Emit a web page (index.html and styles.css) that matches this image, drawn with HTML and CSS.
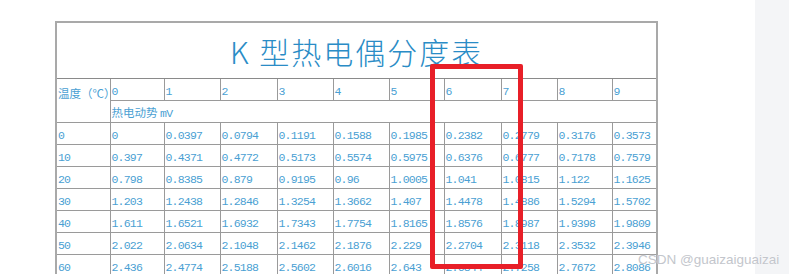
FILE: index.html
```html
<!DOCTYPE html>
<html lang="zh">
<head>
<meta charset="utf-8">
<link rel="stylesheet" href="styles.css">
</head>
<body>
<div class="page">
  <main class="doc">
    <div class="sheet">
      <table class="ktable">
        <colgroup>
          <col class="c54"><col class="c54"><col class="c56"><col class="c57"><col class="c56"><col class="c56"><col class="c55"><col class="c57"><col class="c56"><col class="c55"><col class="c45">
        </colgroup>
        <tr class="title-row"><td colspan="11" class="title">K 型热电偶分度表</td></tr>
        <tr class="hrow"><td rowspan="2" class="cjk label">温度（℃）</td><td>0</td><td>1</td><td>2</td><td>3</td><td>4</td><td>5</td><td>6</td><td>7</td><td>8</td><td>9</td></tr>
        <tr class="hrow"><td colspan="10" class="cjk">热电动势 <span class="mono">mV</span></td></tr>
        <tr class="light"><td>0</td><td>0</td><td>0.0397</td><td>0.0794</td><td>0.1191</td><td>0.1588</td><td>0.1985</td><td>0.2382</td><td>0.2779</td><td>0.3176</td><td>0.3573</td></tr>
        <tr class="dark"><td>10</td><td>0.397</td><td>0.4371</td><td>0.4772</td><td>0.5173</td><td>0.5574</td><td>0.5975</td><td>0.6376</td><td>0.6777</td><td>0.7178</td><td>0.7579</td></tr>
        <tr class="light"><td>20</td><td>0.798</td><td>0.8385</td><td>0.879</td><td>0.9195</td><td>0.96</td><td>1.0005</td><td>1.041</td><td>1.0815</td><td>1.122</td><td>1.1625</td></tr>
        <tr class="dark"><td>30</td><td>1.203</td><td>1.2438</td><td>1.2846</td><td>1.3254</td><td>1.3662</td><td>1.407</td><td>1.4478</td><td>1.4886</td><td>1.5294</td><td>1.5702</td></tr>
        <tr class="light"><td>40</td><td>1.611</td><td>1.6521</td><td>1.6932</td><td>1.7343</td><td>1.7754</td><td>1.8165</td><td>1.8576</td><td>1.8987</td><td>1.9398</td><td>1.9809</td></tr>
        <tr class="dark"><td>50</td><td>2.022</td><td>2.0634</td><td>2.1048</td><td>2.1462</td><td>2.1876</td><td>2.229</td><td>2.2704</td><td>2.3118</td><td>2.3532</td><td>2.3946</td></tr>
        <tr class="light"><td>60</td><td>2.436</td><td>2.4774</td><td>2.5188</td><td>2.5602</td><td>2.6016</td><td>2.643</td><td>2.6844</td><td>2.7258</td><td>2.7672</td><td>2.8086</td></tr>
      </table>
      <div class="highlight"></div>
    </div>
  </main>
  <aside class="side"></aside>
  <div class="watermark">CSDN @guaizaiguaizai</div>
</div>
</body>
</html>
```

FILE: styles.css
```css
html, body {
  margin: 0;
  padding: 0;
  background: #ffffff;
  height: 100%;
  overflow: hidden;
}
.page {
  position: relative;
  display: flex;
  width: 789px;
  height: 274px;
  overflow: hidden;
}
.doc {
  flex: 1;
  padding: 21px 0 0 55px;
  overflow: hidden;
}
.side {
  width: 34px;
  background: #f4f5f7;
}
.sheet {
  position: relative;
  width: 603px;
}
.ktable {
  border-collapse: collapse;
  table-layout: fixed;
  width: 602px;
  border: 2px solid #a9a9a9;
  font-family: "Liberation Mono", monospace;
  font-size: 11.5px;
  letter-spacing: -0.8px;
  color: #4a9fd3;
}
.c54 { width: 54px; }
.c55 { width: 55px; }
.c56 { width: 56px; }
.c57 { width: 57px; }
.c45 { width: 45px; }
.ktable td {
  border: 1px solid #9a9a9a;
  padding: 0 0 2px 1px;
  height: 19px;
  vertical-align: bottom;
  white-space: nowrap;
  overflow: visible;
  line-height: 12px;
}
.ktable tr.dark td {
  border-top-color: #505050;
}
.ktable .title-row td {
  height: 55px;
  padding: 0;
  text-align: center;
  vertical-align: middle;
  font-family: "Noto Sans CJK SC", sans-serif;
  font-weight: 300;
  font-size: 30px;
  letter-spacing: 2px;
  line-height: 34px;
  color: #2a8cc6;
  border-bottom-color: #8a8a8a;
}
.cjk {
  font-family: "Noto Sans CJK SC", sans-serif;
  font-size: 11.5px;
  letter-spacing: 0;
}
.ktable td.label {
  vertical-align: top;
  padding-top: 8px;
  position: relative;
  z-index: 1;
}
.mono {
  font-family: "Liberation Mono", monospace;
  letter-spacing: -0.8px;
}
.highlight {
  position: absolute;
  left: 375px;
  top: 43px;
  width: 83px;
  height: 195px;
  border: 5px solid #e81f28;
  border-radius: 2px;
}
.watermark {
  position: absolute;
  left: 638px;
  top: 252px;
  font-family: "Liberation Sans", sans-serif;
  font-size: 13.5px;
  color: #c3c6cc;
  white-space: nowrap;
  text-shadow: 0 0 1px #ffffff;
}
```
